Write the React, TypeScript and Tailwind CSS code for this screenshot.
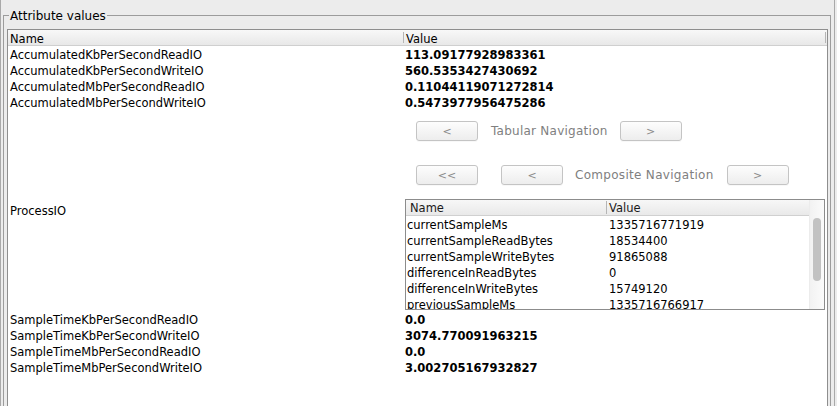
import React from "react";

const topRows = [
  ["AccumulatedKbPerSecondReadIO", "113.09177928983361"],
  ["AccumulatedKbPerSecondWriteIO", "560.5353427430692"],
  ["AccumulatedMbPerSecondReadIO", "0.11044119071272814"],
  ["AccumulatedMbPerSecondWriteIO", "0.5473977956475286"],
];

const bottomRows = [
  ["SampleTimeKbPerSecondReadIO", "0.0"],
  ["SampleTimeKbPerSecondWriteIO", "3074.770091963215"],
  ["SampleTimeMbPerSecondReadIO", "0.0"],
  ["SampleTimeMbPerSecondWriteIO", "3.002705167932827"],
];

const processRows = [
  ["currentSampleMs", "1335716771919"],
  ["currentSampleReadBytes", "18534400"],
  ["currentSampleWriteBytes", "91865088"],
  ["differenceInReadBytes", "0"],
  ["differenceInWriteBytes", "15749120"],
  ["previousSampleMs", "1335716766917"],
];

const NavButton = ({ label, className = "" }: { label: string; className?: string }) => (
  <button className={`w-[62px] h-[20px] rounded-[3px] border border-[#c4c4c4] bg-gradient-to-b from-[#fdfdfd] to-[#ededed] text-[11px] leading-none text-[#8a8a8a] shadow-[0_1px_0_#f8f8f8] ${className}`}>
    {label}
  </button>
);

// leading a bit taller than the row so the glyphs sit 1px lower, like the Swing table
const Row = ({ name, value }: { name: string; value: string }) => (
  <div className="flex h-[16px] leading-[18px]">
    <div className="w-[396px] pl-[2px] text-black">{name}</div>
    <div className="pl-[1px] font-bold text-black">{value}</div>
  </div>
);

const ProcessTable = () => (
  <div className="w-[420px] h-[111px] border border-[#8c8c8c] bg-white flex overflow-hidden">
    <div className="flex-1 flex flex-col">
      <div className="flex h-[16px] border-b border-[#d0d0d0] bg-gradient-to-b from-[#f7f7f7] to-[#e9e9e9] text-[#1a1a1a]">
        <div className="w-[201px] pl-[4px] border-r border-[#b5b5b5] my-[1px] leading-[14px]">Name</div>
        <div className="flex-1 pl-[2px] leading-[16px]">Value</div>
      </div>
      {processRows.map(([n, v]) => (
        <div key={n} className="flex h-[16px] leading-[18px] shrink-0">
          <div className="w-[202px] pl-[1px]">{n}</div>
          <div className="pl-[1px]">{v}</div>
        </div>
      ))}
    </div>
    <div className="w-[15px] border-l border-[#ececec] bg-gradient-to-r from-[#f2f2f2] to-[#fbfbfb] flex justify-center">
      <div className="mt-[18px] w-[8px] h-[63px] rounded-full bg-[#c2c2c2]" />
    </div>
  </div>
);

export default function App() {
  return (
    <div
      className="w-[837px] h-[406px] bg-[#ececec] overflow-hidden text-[11.5px] text-black"
      style={{ fontFamily: '"DejaVu Sans", sans-serif' }}
    >
      <div className="w-[835px] h-full border-x border-[#a9a9a9] pl-[2px] pr-[3px] pt-[15px] flex flex-col">
        <div className="relative flex-1 border-t border-x border-[#9c9c9c] pl-[3px] pr-[2px] pt-[13px] flex flex-col">
          <span className="absolute left-[5px] -top-[8px] px-[1px] bg-[#ececec] leading-[16px] text-[12px]">
            Attribute values
          </span>
          <div className="flex-1 border-t border-x border-[#8e8e8e] bg-white flex flex-col overflow-hidden">
            <div className="flex h-[16px] border-b border-[#cfcfcf] bg-gradient-to-b from-[#f8f8f8] to-[#e8e8e8]">
              <div className="w-[396px] pl-[2px] leading-[14px] border-r border-[#b5b5b5] my-[2px]">Name</div>
              <div className="flex-1 pl-[2px] leading-[14px] border-r border-[#b5b5b5] my-[2px] mr-[1px]">Value</div>
            </div>
            {topRows.map(([n, v]) => (
              <Row key={n} name={n} value={v} />
            ))}
            <div className="flex h-[201px]">
              <div className="w-[396px] pl-[2px] flex items-center leading-[16px]">ProcessIO</div>
              <div className="pl-[1px] flex flex-col">
                <div className="mt-[11px] ml-[11px] flex items-center h-[20px]">
                  <NavButton label="<" />
                  <span className="ml-[13px] text-[12px] text-[#808080] tracking-[0.25px]">Tabular Navigation</span>
                  <NavButton label=">" className="ml-[12px]" />
                </div>
                <div className="mt-[24px] ml-[11px] flex items-center h-[20px]">
                  <NavButton label="<<" />
                  <NavButton label="<" className="ml-[23px]" />
                  <span className="ml-[12px] text-[12px] text-[#808080] tracking-[0.3px]">Composite Navigation</span>
                  <NavButton label=">" className="ml-[13px]" />
                </div>
                <div className="mt-[14px]">
                  <ProcessTable />
                </div>
              </div>
            </div>
            {bottomRows.map(([n, v]) => (
              <Row key={n} name={n} value={v} />
            ))}
          </div>
        </div>
      </div>
    </div>
  );
}
